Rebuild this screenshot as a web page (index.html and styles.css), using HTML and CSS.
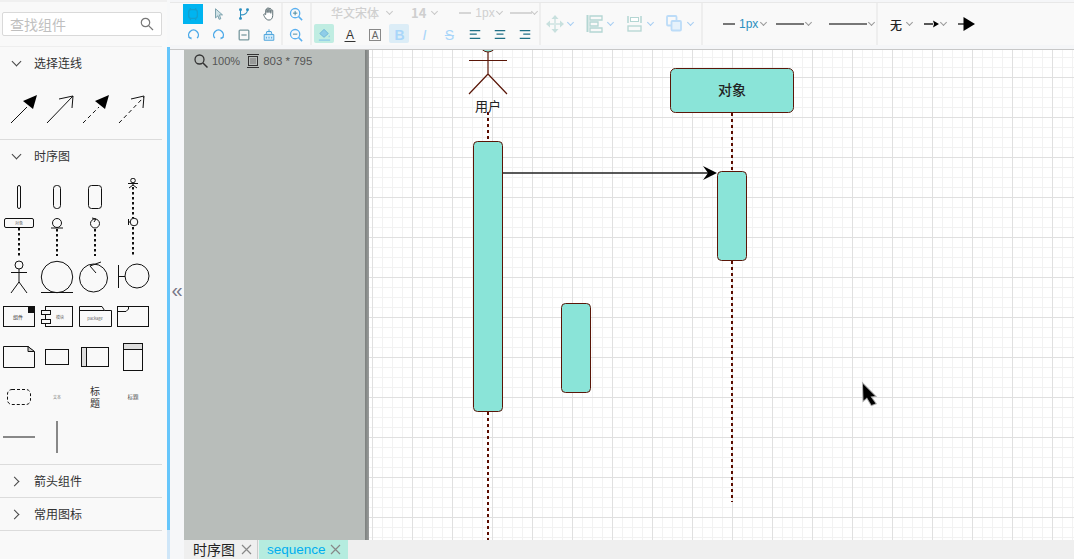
FILE: index.html
```html
<!DOCTYPE html>
<html lang="zh">
<head>
<meta charset="utf-8">
<title>时序图</title>
<link rel="stylesheet" href="styles.css">
</head>
<body>
<div class="app">
  <aside class="sidebar">
    <div class="search">
      <span class="search-text">查找组件</span>
      <svg class="search-icon" width="14" height="14" viewBox="0 0 14 14"><circle cx="5.500" cy="5.500" r="4.200"/><path d="M8.600 8.600 13 13"/></svg>
    </div>
    <section class="panel panel-arrows">
      <header class="panel-head"><i class="caret down"></i><span>选择连线</span></header>
      <div class="arrow-row">
        <svg width="36" height="40" viewBox="0 0 36 40"><path class="ink" d="M11 33 27 17"/><path d="M37 5 23 11 33 19Z" fill="#000"/></svg>
        <svg width="36" height="40" viewBox="0 0 36 40"><path class="ink" d="M11 33 37 6M23 9 37 6 36 18"/></svg>
        <svg width="36" height="40" viewBox="0 0 36 40"><path class="ink dash" d="M11 33 27 17"/><path d="M37 5 23 11 33 19Z" fill="#000"/></svg>
        <svg width="36" height="40" viewBox="0 0 36 40"><path class="ink dash" d="M11 33 36 7"/><path class="ink" d="M23 9 36 6 35 18"/></svg>
      </div>
    </section>
    <section class="panel panel-seq">
      <header class="panel-head"><i class="caret down"></i><span>时序图</span></header>
      <div class="stencils">
        <svg class="r1" viewBox="0 0 38 39"><rect class="ink" x="17.500" y="7.500" width="3" height="23" rx="1.500"/></svg>
        <svg class="r1" viewBox="0 0 38 39"><rect class="ink" x="15.500" y="7.500" width="7" height="23" rx="3"/></svg>
        <svg class="r1" viewBox="0 0 38 39"><rect class="ink" x="12.500" y="7.500" width="13" height="23" rx="3"/></svg>
        <svg class="r12" viewBox="0 0 38 78">
          <circle class="ink" cx="19" cy="2.500" r="2.300"/><path class="ink" d="M14 5.500H24M19 5V7L15 10M19 7 23 10"/>
          <path class="dots" d="M19 9V40M19 49V78"/>
          <circle class="ink" cx="20" cy="44" r="3.800"/><path class="ink" d="M14.500 41V47M14.500 44H16"/>
        </svg>
        <svg class="r1" viewBox="0 0 38 39"><rect class="ink" x="4.500" y="1.500" width="29" height="9" rx="1.500"/><text class="tiny" x="19" y="7.500">对象</text><path class="dots" d="M19 11V39"/></svg>
        <svg class="r1" viewBox="0 0 38 39"><circle class="ink" cx="19" cy="6" r="4.500"/><path class="ink" d="M13 11H25"/><path class="dots" d="M19 12V39"/></svg>
        <svg class="r1" viewBox="0 0 38 39"><circle class="ink" cx="19" cy="6.500" r="4.500"/><path class="ink" d="M16 1 20 2 18 5"/><path class="dots" d="M19 12V39"/></svg>
        <svg class="r3" viewBox="0 0 38 43"><circle class="ink" cx="19" cy="9" r="4"/><path class="ink" d="M19 13V27M11 16.500H27M19 26 11 37M19 26 27 37"/></svg>
        <svg class="r3" viewBox="0 0 38 43"><circle class="ink" cx="19" cy="21" r="15.700"/><path class="ink" d="M3 36.500H35"/></svg>
        <svg class="r3" viewBox="0 0 38 43"><circle class="ink" cx="17.500" cy="22" r="14"/><path class="ink" d="M25 6 14 10 20 17"/></svg>
        <svg class="r3" viewBox="0 0 38 43"><circle class="ink" cx="23" cy="20" r="12"/><path class="ink" d="M4.500 9V32M4.500 20.500H11"/></svg>

        <svg class="r1" viewBox="0 0 38 39"><rect class="ink" x="3.500" y="7.500" width="31" height="20"/><rect x="28" y="8" width="6" height="6" fill="#111"/><text class="tiny dark" x="18" y="19.500">组件</text></svg>
        <svg class="r1" viewBox="0 0 38 39"><rect class="ink" x="7.500" y="7.500" width="27" height="20"/><rect class="ink white" x="3.500" y="11.500" width="9" height="4"/><rect class="ink white" x="3.500" y="20.500" width="9" height="4"/><text class="tiny" x="22" y="19.500">模块</text></svg>
        <svg class="r1" viewBox="0 0 38 39"><path class="ink" d="M3.500 27.500V7.500H26L28.500 11.500H35.500V27.500ZM3.500 11.500H28.500"/><text class="tiny" x="19" y="20.500">package</text></svg>
        <svg class="r1" viewBox="0 0 38 39"><rect class="ink" x="3.500" y="7.500" width="31" height="20"/><path class="ink" d="M3.500 12.500H12L14.500 10V7.500"/></svg>

        <svg class="r1" viewBox="0 0 38 39"><path class="ink" d="M3.500 8.500H28L34.500 14V29.500H3.500Z"/><path d="M28 8.500V13.500H34.500Z" fill="#ccc" stroke="#111"/></svg>
        <svg class="r1" viewBox="0 0 38 39"><rect class="ink" x="7.500" y="11.500" width="23" height="15"/></svg>
        <svg class="r1" viewBox="0 0 38 39"><rect class="ink" x="5.500" y="9.500" width="27" height="19"/><rect x="6" y="10" width="4.500" height="18" fill="#ddd"/><path class="ink" d="M10.500 9.500V28.500"/></svg>
        <svg class="r1" viewBox="0 0 38 39"><rect class="ink" x="9.500" y="5.500" width="19" height="27"/><rect x="10" y="6" width="18" height="5" fill="#ddd"/><path class="ink" d="M9.500 11.500H28.500"/></svg>

        <svg class="r1" viewBox="0 0 38 39"><rect class="ink dash-box" x="7.500" y="12.500" width="23" height="15" rx="4.500"/></svg>
        <div class="cell r1"><span class="mini">文本</span></div>
        <div class="cell r1"><span class="title-v">标题</span></div>
        <div class="cell r1"><span class="mini strong">标题</span></div>

        <svg class="r1" viewBox="0 0 38 39"><path class="rule" d="M3 21H35"/></svg>
        <svg class="r1" viewBox="0 0 38 39"><path class="rule" d="M19 5V37"/></svg>
      </div>
    </section>
    <section class="panel panel-fold">
      <header class="panel-head"><i class="caret right"></i><span>箭头组件</span></header>
    </section>
    <section class="panel panel-fold">
      <header class="panel-head"><i class="caret right"></i><span>常用图标</span></header>
    </section>
  </aside>
  <div class="stripe"></div>

  <div class="workspace">
    <div class="topbar">
      <div class="toolbar">
        <div class="group g1">
          <div class="tool-grid">
            <span class="tool selected"><svg width="14" height="14" viewBox="0 0 16 16"><rect x="3" y="3" width="10" height="10" rx="3" fill="none" stroke="#12a0d0" stroke-width="1.500"/><path d="M5 1V3M11 1V3M5 13V15M11 13V15" stroke="#12a0d0" stroke-width="1.500"/></svg></span>
            <span class="tool"><svg width="14" height="14" viewBox="0 0 16 16"><path d="M4 2 12 9H8.500L10 13.500 8 14 6.800 10 4 12.500Z" fill="#cfe2e6" stroke="#6f98a5"/></svg></span>
            <span class="tool"><svg width="14" height="14" viewBox="0 0 16 16"><path d="M4 3V13M4 9C9 9 12 8 12 3" fill="none" stroke="#2a8fc0" stroke-width="1.200"/><circle cx="4" cy="3" r="1.700" fill="#2a8fc0"/><circle cx="12" cy="3" r="1.700" fill="#2a8fc0"/><circle cx="4" cy="13" r="1.700" fill="#2a8fc0"/></svg></span>
            <span class="tool"><svg width="15" height="15" viewBox="0 0 16 16"><path d="M5 9V4.500C5 3 6.500 3 6.500 4.500V7M6.500 7V3C6.500 1.500 8.500 1.500 8.500 3V7M8.500 7V3.500C8.500 2 10.500 2 10.500 3.500V8M10.500 7V5C10.500 3.800 12.500 3.800 12.500 5V10C12.500 13 11 15 8.500 15 6 15 5 13.500 3.500 11 2 8.500 3.800 7.500 5 9.500" fill="#fff" stroke="#55686d"/></svg></span>

            <span class="tool"><svg width="13" height="13" viewBox="0 0 16 16"><path d="M3.500 12.500A6 6 0 1 1 12.500 12.500" fill="none" stroke="#4aa8e8" stroke-width="1.700"/><path d="M1 11.500H5.500V14Z" fill="#4aa8e8"/></svg></span>
            <span class="tool"><svg width="13" height="13" viewBox="0 0 16 16"><path d="M3.500 12.500A6 6 0 1 1 12.500 12.500" fill="none" stroke="#4aa8e8" stroke-width="1.700"/><path d="M15 11.500H10.500V14Z" fill="#4aa8e8"/></svg></span>
            <span class="tool"><svg width="14" height="14" viewBox="0 0 16 16"><rect x="2.500" y="2.500" width="11" height="11" rx="1" fill="none" stroke="#7a9aa0" stroke-width="1.500"/><path d="M5 8H11" stroke="#7a9aa0" stroke-width="1.500"/></svg></span>
            <span class="tool"><svg width="14" height="14" viewBox="0 0 16 16"><path d="M2.500 7.500H13.500V14H2.500ZM4.500 7.500 5.500 4H10.500L11.500 7.500M8 4V1.500" fill="#d6ecfa" stroke="#3d9bd8"/><path d="M5 10V12M8 10V12M11 10V12" stroke="#3d9bd8"/></svg></span>
          </div>
        </div>
        <div class="group g2">
          <span class="tool"><svg width="14" height="14" viewBox="0 0 16 16"><circle cx="7" cy="7" r="5.300" fill="none" stroke="#5ab0f0" stroke-width="1.500"/><path d="M11 11 15 15" stroke="#5ab0f0" stroke-width="1.700"/><path d="M4.500 7H9.500M7 4.500V9.500" stroke="#3a7f96"/></svg></span>
          <span class="tool"><svg width="14" height="14" viewBox="0 0 16 16"><circle cx="7" cy="7" r="5.300" fill="none" stroke="#5ab0f0" stroke-width="1.500"/><path d="M11 11 15 15" stroke="#5ab0f0" stroke-width="1.700"/><path d="M4.500 7H9.500" stroke="#3a7f96"/></svg></span>
        </div>
        <div class="group g3">
          <div class="font-row">
            <span class="font-name">华文宋体</span><i class="chev pale font-chev"></i>
            <span class="font-size">14</span><i class="chev pale size-chev"></i>
            <i class="ln ln-12 pale-bg w1"></i><span class="px pale-text">1px</span><i class="chev pale px-pale-chev"></i>
            <i class="ln ln-22 pale-bg w2"></i><i class="chev pale last-chev"></i>
          </div>
          <div class="format-row">
            <span class="tool tinted-mint"><svg width="15" height="15" viewBox="0 0 16 16"><path d="M3 7 7.500 2.500 12 7 7.500 11Z" fill="#8fcde8" stroke="#6db5d6"/><path d="M13 8.500C14 10 14 11 13 11 12 11 12 10 13 8.500Z" fill="#8fcde8"/><path d="M2 14H14" stroke="#8fcde8" stroke-width="1.500"/></svg></span>
            <span class="tool"><svg width="16" height="16" viewBox="0 0 16 16"><text class="glyph" x="8" y="11.500">A</text><path d="M2.500 14.500H13.500" stroke="#333"/></svg></span>
            <span class="tool"><svg width="16" height="16" viewBox="0 0 16 16"><rect x="2.500" y="2.500" width="11" height="11" fill="none" stroke="#888"/><text class="glyph small" x="8" y="11.500">A</text></svg></span>
            <span class="tool tinted-blue"><b class="fmt">B</b></span>
            <span class="tool"><i class="fmt">I</i></span>
            <span class="tool"><s class="fmt">S</s></span>
            <span class="tool"><svg width="14" height="11" viewBox="0 0 16 12"><path d="M2 1.500H14M2 5.500H10M2 10.500H14" class="align"/></svg></span>
            <span class="tool"><svg width="14" height="11" viewBox="0 0 16 12"><path d="M2 1.500H14M4 5.500H12M2 10.500H14" class="align"/></svg></span>
            <span class="tool"><svg width="14" height="11" viewBox="0 0 16 12"><path d="M2 1.500H14M6 5.500H14M2 10.500H14" class="align"/></svg></span>
          </div>
        </div>
        <div class="group g4">
          <span class="drop"><svg width="18" height="18" viewBox="0 0 18 18"><path d="M3 9H15M9 3V15" stroke="#d8e8e7" stroke-width="2"/><path d="M9 0 12.500 4H5.500ZM9 18 12.500 14H5.500ZM0 9 4 5.500V12.500ZM18 9 14 5.500V12.500Z" fill="#c8e0de"/></svg><i class="chev sky"></i></span>
          <span class="drop"><svg width="18" height="18" viewBox="0 0 18 18"><path d="M1.500 0V17" stroke="#b4d6d3" stroke-width="2"/><path d="M4 1H16V5H4ZM4 7H12V11H4ZM4 13H16V17H4Z" fill="none" stroke="#b4d6d3" stroke-width="1.300"/></svg><i class="chev sky"></i></span>
          <span class="drop"><svg width="18" height="18" viewBox="0 0 18 18"><path d="M2 1V8M15 1V8" stroke="#b4d6d3" stroke-width="1.500"/><rect x="4.500" y="2.500" width="8" height="4" fill="#fff" stroke="#b4d6d3"/><rect x="2" y="11" width="13" height="5" fill="none" stroke="#b4d6d3" stroke-width="1.300"/></svg><i class="chev sky"></i></span>
          <span class="drop"><svg width="18" height="18" viewBox="0 0 18 18"><rect x="1" y="1" width="9.500" height="9.500" rx="1" fill="none" stroke="#bcdcf8" stroke-width="1.800"/><rect x="5.500" y="6" width="9.500" height="9.500" rx="1" fill="#e6f2fb" stroke="#bcdcf8" stroke-width="1.800"/></svg><i class="chev sky"></i></span>
        </div>
        <div class="group g5">
          <i class="ln ln-12 grey-bg"></i><span class="px">1px</span><i class="chev grey px-chev"></i>
          <i class="ln ln-28 grey-bg"></i><i class="chev grey"></i>
          <i class="ln ln-38 grey-bg"></i><i class="chev grey"></i>
        </div>
        <div class="group g6">
          <span class="none">无</span><i class="chev grey none-chev"></i>
          <svg class="end1" width="15" height="10" viewBox="0 0 15 10"><path d="M0 5H9" stroke="#222" stroke-width="1.500"/><path d="M15 5 9 1.500 10 5 9 8.500Z" fill="#000"/></svg><i class="chev grey"></i>
          <svg class="end2" width="17" height="14" viewBox="0 0 17 14"><path d="M0 7H6" stroke="#333" stroke-width="1.500"/><path d="M17 7 5.500 0V14Z" fill="#000"/></svg>
        </div>
      </div>
    </div>

    <div class="body-row">
      <div class="gutter"><span class="collapse">«</span></div>
      <main class="main">
        <div class="canvas-row">
          <div class="pane">
            <div class="status">
              <svg width="14" height="14" viewBox="0 0 14 14"><circle cx="5.500" cy="5.500" r="4.500" fill="none" stroke="#333" stroke-width="1.300"/><path d="M9 9 13.500 13.500" stroke="#333" stroke-width="1.500"/></svg>
              <span class="zoom-val">100%</span>
              <svg width="12" height="14" viewBox="0 0 12 14"><path d="M0 .5H12M0 13.500H12" stroke="#333"/><rect x="1.500" y="2.500" width="9" height="9" fill="none" stroke="#333"/><path d="M3 5H9M3 7H9M3 9H9" stroke="#777"/></svg>
              <span class="size-val">803 * 795</span>
            </div>
          </div>
          <div class="pane-edge"></div>
          <div class="stage">
            <svg class="diagram" width="705" height="490" viewBox="369 50 705 490">
              <path class="life" d="M488 112V141M488 412V540M732 113V171M732 261V502"/>
              <circle class="node" cx="488" cy="44" r="8"/>
              <path class="stroke" d="M488 52V74M469 60.500H507M488 74 469 94M488 74 507 94"/>
              <text class="label" x="488" y="111">用户</text>
              <rect class="node" x="670.500" y="68.500" width="123" height="44" rx="5"/>
              <text class="label bold" x="732" y="95">对象</text>
              <rect class="node" x="473.500" y="141.500" width="29" height="270" rx="4"/>
              <rect class="node" x="717.500" y="171.500" width="29" height="89" rx="4"/>
              <rect class="node" x="561.500" y="303.500" width="29" height="89" rx="4"/>
              <path class="msg" d="M503 173H708"/>
              <path d="M717 173 703 166 708 173 703 180Z" fill="#000"/>
              <path class="pointer" d="M863 384 875 396 870.500 396.500 875.500 403.500 871.500 405 867 397.500 863.500 400.500Z"/>
            </svg>
          </div>
        </div>
        <nav class="tabs">
          <span class="tab">时序图<svg width="11" height="11" viewBox="0 0 11 11"><path d="M1 1 10 10M10 1 1 10"/></svg></span>
          <span class="tab active">sequence<svg width="11" height="11" viewBox="0 0 11 11"><path d="M1 1 10 10M10 1 1 10"/></svg></span>
        </nav>
      </main>
    </div>
  </div>
</div>
</body>
</html>
```
FILE: styles.css
```css
* { box-sizing: border-box; }
html, body { margin: 0; height: 100%; overflow: hidden; }
body { font-family: "Noto Sans CJK SC", "Liberation Sans", sans-serif; font-size: 12px; color: #333; background: #fff; }
.app { display: flex; width: 1074px; height: 559px; }

/* Sidebar */
.sidebar { width: 167px; height: 559px; background: #f9f9f9; border-top: 2px solid #f0f0f0; flex: none; }
.stripe { width: 3px; flex: none; background: linear-gradient(to bottom, #f7f8f9 47px, #66c6fb 47px, #66c6fb 530px, #cfe6f8 530px); }
.search { display: flex; align-items: center; justify-content: space-between; width: 160px; height: 24px; margin: 10px 0 10px 2px; padding: 0 7px; background: #fff; border: 1px solid #d9d9d9; border-radius: 2px; }
.search-text { font-size: 14px; color: #bfbfbf; line-height: 22px; }
.search-icon { fill: none; stroke: #777; stroke-width: 1.200; }
.panel { width: 162px; border-bottom: 1px solid #dcdcdc; }
.panel-arrows { height: 94px; border-top: 1px solid #eee; }
.panel-seq { height: 325px; }
.panel-fold { height: 33px; }
.panel-head { display: flex; align-items: center; height: 32px; }
.panel-head span { font-size: 12px; line-height: 16px; color: #333; }
.caret { width: 7px; height: 7px; border: solid #444; border-width: 0 1px 1px 0; display: block; flex: none; }
.caret.down { transform: rotate(45deg); margin: -4px 14px 0 13px; }
.caret.right { transform: rotate(-45deg); margin: 0 16px 0 11px; }
.arrow-row { display: flex; margin-top: 11px; }
.arrow-row svg { display: block; flex: none; overflow: visible; }
.ink { fill: none; stroke: #111; stroke-width: 1; }
.ink.white { fill: #f9f9f9; }
.ink.dash { stroke-dasharray: 4 3; }
.ink.dash-box { stroke-dasharray: 3 2; }
.dots { fill: none; stroke: #111; stroke-width: 2; stroke-dasharray: 2.500 2.500; }
.rule { stroke: #888; stroke-width: 2; fill: none; }
.stencils { display: grid; grid-template-columns: repeat(4, 38px); grid-template-rows: 39px 39px 43px 39px 39px 39px 39px; margin-top: 6px; }
.stencils svg { display: block; width: 38px; height: 39px; }
.stencils .r3 { height: 43px; }
.stencils .r12 { height: 78px; grid-row: span 2; grid-column: 4; }
.tiny { font-size: 4px; fill: #666; text-anchor: middle; }
.tiny.dark { font-size: 5px; fill: #333; }
.cell { display: flex; align-items: center; justify-content: center; height: 39px; }
.mini { font-size: 4px; color: #777; line-height: 8px; }
.mini.strong { color: #444; font-size: 5.500px; }
.title-v { width: 10px; font-size: 10px; line-height: 12px; color: #333; text-align: center; }

/* Toolbar */
.workspace { flex: 1; display: flex; flex-direction: column; min-width: 0; background: #fff; }
.topbar { height: 50px; flex: none; background: #f5f6f8; border-bottom: 1px solid #c8c8c8; padding-top: 2px; }
.toolbar { display: flex; height: 43px; background: #f9f9f9; border-top: 1px solid #e8e8e8; padding-left: 11px; }
.group { flex: none; border-right: 2px solid #eeeeee; height: 42px; }
.g1 { width: 102px; }
.g2 { width: 29px; }
.g3 { width: 229px; }
.g4 { width: 162px; display: flex; align-items: center; }
.g5 { width: 175px; display: flex; align-items: center; padding-left: 20px; }
.g6 { border: 0; display: flex; align-items: center; padding-left: 12px; }
.tool-grid { display: grid; grid-template-columns: repeat(4, 25px); grid-auto-rows: 21px; }
.tool { display: flex; align-items: center; justify-content: center; width: 25px; height: 21px; }
.tool svg { display: block; }
.tool.selected { width: 20px; height: 20px; margin: 1px 0 0 2px; background: #00b4f0; }
.chev { display: block; flex: none; width: 5px; height: 5px; margin-left: 2px; margin-top: -3px; border: solid #999; border-width: 0 1px 1px 0; transform: rotate(45deg); }
.chev.pale { border-color: #c8c8c8; }
.chev.grey { border-color: #999; }
.chev.sky { border-color: #a6cdf2; }
.font-row { display: flex; align-items: center; height: 21px; padding: 0 0 2px 19px; }
.font-name { font-size: 12px; color: #d0d0d0; font-weight: 500; }
.font-size { font-size: 13px; color: #cfcfcf; font-weight: 700; margin-left: 19px; }
.font-chev { margin-left: 8px; }
.size-chev { margin-left: 6px; }
.w1 { margin-left: 22px; }
.w2 { margin-left: 8px; }
.px { font-family: "Liberation Sans", sans-serif; font-size: 12px; color: #2a8fc0; margin-left: 4px; }
.pale-text { color: #d0d0d0; }
.px-chev { margin-left: 3px; }
.px-pale-chev { margin-left: 2px; }
.last-chev { margin-left: 0; }
.format-row { display: flex; }
.tinted-mint, .tinted-blue { position: relative; z-index: 0; }
.tinted-mint::before, .tinted-blue::before { content: ""; position: absolute; z-index: -1; left: 2px; top: 0; width: 20px; height: 19px; border-radius: 2px; }
.tinted-mint::before { background: #c0ede2; }
.tinted-blue::before { background: #dcedf7; }
.fmt { font-family: "Liberation Sans", sans-serif; font-size: 14px; line-height: 16px; color: #a9d6fa; }
.glyph { font-family: "Liberation Sans", sans-serif; font-size: 12px; fill: #333; text-anchor: middle; }
.glyph.small { font-size: 10px; fill: #666; }
.align { fill: none; stroke: #1f6f86; stroke-width: 1.300; }
.drop { display: flex; align-items: center; width: 40px; padding-left: 5px; }
.drop svg { display: block; flex: none; }
.drop .chev { margin-left: 4px; }
.ln { display: block; flex: none; height: 2px; }
.ln-12 { width: 12px; }
.ln-22 { width: 22px; }
.ln-28 { width: 28px; margin-left: 10px; }
.ln-38 { width: 38px; margin-left: 18px; }
.grey-bg { background: #777; }
.pale-bg { background: #d6d6d6; }
.none { font-size: 12px; font-weight: 500; color: #222; }
.none-chev { margin-left: 5px; }
.end1 { margin-left: 12px; display: block; flex: none; }
.end2 { margin-left: 12px; display: block; flex: none; }

/* Canvas */
.body-row { flex: 1; display: flex; min-height: 0; }
.gutter { width: 14px; flex: none; display: flex; align-items: center; justify-content: center; background: #f6f7f9; padding-bottom: 30px; }
.collapse { font-family: "Liberation Sans", sans-serif; font-size: 20px; line-height: 20px; color: #778; }
.main { flex: 1; display: flex; flex-direction: column; min-width: 0; }
.canvas-row { flex: 1; display: flex; min-height: 0; }
.pane { width: 181px; flex: none; background: #b8bdba; }
.status { display: flex; align-items: center; height: 20px; margin-top: 1px; padding-left: 10px; font-family: "Liberation Sans", sans-serif; font-size: 11px; color: #555; }
.status svg { display: block; flex: none; }
.zoom-val { margin: 0 7px 0 4px; }
.size-val { margin-left: 4px; font-size: 11.500px; }
.pane-edge { width: 4px; flex: none; background: linear-gradient(to right, #7b7f7d, #9a9d9c); }
.stage { flex: 1; position: relative; overflow: hidden; background-color: #fff;
  background-image:
    linear-gradient(to right, #e0e0e0 1px, transparent 1px),
    linear-gradient(to bottom, #e0e0e0 1px, transparent 1px),
    linear-gradient(to right, #f2f2f2 1px, transparent 1px),
    linear-gradient(to bottom, #f2f2f2 1px, transparent 1px);
  background-size: 40px 40px, 40px 40px, 10px 10px, 10px 10px;
  background-position: 3px 27px, 3px 27px, 3px 7px, 3px 7px; }
.diagram { position: absolute; left: 0; top: 0; display: block; }
.life { fill: none; stroke: #5c0d00; stroke-width: 2; stroke-dasharray: 3 3; }
.node { fill: #8ae4d8; stroke: #5a1608; stroke-width: 1; }
.stroke { fill: none; stroke: #5a1608; stroke-width: 1.200; }
.label { font-size: 13px; fill: #222; text-anchor: middle; }
.label.bold { font-size: 14px; font-weight: 500; }
.msg { stroke: #222; stroke-width: 1.300; fill: none; }
.pointer { fill: #000; stroke: #aaa; stroke-width: 2; paint-order: stroke; }
.tabs { display: flex; height: 19px; flex: none; background: #efefef; }
.tab { display: flex; align-items: center; flex: none; height: 19px; padding: 0 6px 0 9px; font-size: 14px; line-height: 19px; white-space: nowrap; color: #222; border-right: 1px solid #ccc; width: 74px; }
.tab svg { margin-left: 6px; flex: none; fill: none; stroke: #888; stroke-width: 1.200; }
.tab.active { width: 89px; padding-left: 8px; background: #b5ecdf; color: #00aeef; border: 0; font-family: "Liberation Sans", sans-serif; font-size: 13.500px; margin-left: 1px; }
.tab.active svg { margin-left: 4px; }
```
